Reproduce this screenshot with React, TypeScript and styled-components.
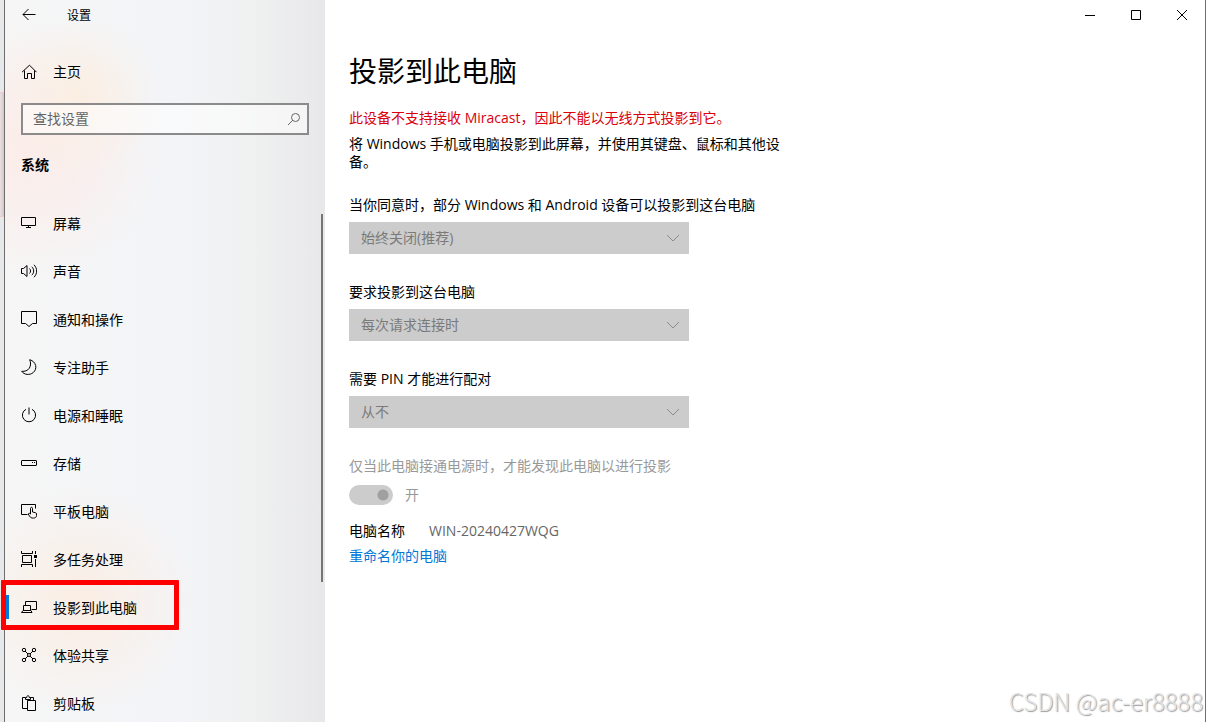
import React from "react";
import styled, { createGlobalStyle } from "styled-components";

const GlobalStyle = createGlobalStyle`
  * { box-sizing: border-box; }
  body {
    margin: 0;
    background: #fff;
    color: #000;
    font-family: "Open Sans", "Noto Sans CJK SC", sans-serif;
    font-size: 14px;
    line-height: 18px;
  }
  button, input, select { font: inherit; color: inherit; }
`;

const Desktop = styled.div`
  position: relative;
  display: flex;
  height: 100vh;
  overflow: hidden;
  padding-left: 4px;
  background:
    linear-gradient(#f3c9c9, #f3c9c9) 0 92px / 4px 1px no-repeat,
    linear-gradient(#f3c9c9, #f3c9c9) 0 216px / 4px 1px no-repeat,
    linear-gradient(90deg, #ecdfe0, #d2c8c9) 0 92px / 4px 125px no-repeat,
    linear-gradient(90deg, #e6e8ea, #cdd0d2);
`;

const Window = styled.div`
  display: flex;
  flex: 1;
  min-width: 0;
  border: solid #6e6e6e;
  border-width: 0 1px;
  background: #fff;
`;

const Sidebar = styled.aside`
  display: flex;
  flex-direction: column;
  flex: 0 0 320px;
  min-height: 0;
  background:
    radial-gradient(circle at 75px 95px, rgba(252, 238, 222, 0.7), rgba(252, 238, 222, 0.4) 35px, rgba(252, 238, 222, 0) 80px),
    radial-gradient(circle at 25px 150px, rgba(252, 235, 231, 0.85), rgba(252, 235, 231, 0.5) 65px, rgba(252, 235, 231, 0) 130px),
    radial-gradient(circle at 75px 600px, rgba(252, 235, 222, 0.8), rgba(252, 235, 222, 0.45) 50px, rgba(252, 235, 222, 0) 115px),
    linear-gradient(90deg, #f6f6f6, #f4f5f7 30%, #f3f4f7 55%, #f0f1f1 75%, #e8e8ea);
`;

const SidebarTop = styled.header`
  display: flex;
  align-items: center;
  gap: 30px;
  height: 30px;
  padding-left: 16px;
  font-size: 12px;
`;

const IconButton = styled.button`
  display: grid;
  place-items: center;
  padding: 0;
  border: 0;
  background: none;
`;

const Glyph = styled.svg`
  display: block;
  flex: none;
  fill: none;
  stroke: currentColor;
  stroke-width: 1;
`;

const SideText = styled.span`
  padding-top: 2px;
`;

const rowLayout = `
  display: flex;
  align-items: center;
  gap: 16px;
  height: 48px;
  padding-left: 16px;
  color: #000;
  text-decoration: none;
`;

const HomeLink = styled.a`
  ${rowLayout}
  margin-top: 18px;
`;

const SearchBox = styled.form`
  display: flex;
  align-items: center;
  height: 32px;
  margin: 7px 16px 0;
  padding: 0 6px 0 10px;
  border: 2px solid #8b8b8b;
  background: rgba(255, 255, 255, 0.5);
  color: #666;
`;

const SearchInput = styled.input`
  flex: 1;
  min-width: 0;
  padding: 0;
  border: 0;
  outline: 0;
  background: none;
  &::placeholder { color: #666; opacity: 1; }
`;

const GroupTitle = styled.h2`
  margin: 21px 0 0 16px;
  font-size: 14px;
  line-height: 18px;
  font-weight: 700;
`;

const NavArea = styled.div`
  position: relative;
  flex: 1;
  min-height: 0;
  margin: 25px 0 0 -5px;
`;

const NavList = styled.ul`
  height: 100%;
  margin: 0;
  padding: 0 0 0 5px;
  overflow-y: auto;
  scrollbar-width: none;
  list-style: none;
`;

const NavItem = styled.li`
  position: relative;
`;

const NavLink = styled.a<{ $current: boolean }>`
  ${rowLayout}
  background: ${(p) =>
    p.$current ? "linear-gradient(#0078d7, #0078d7) 0 12px / 4px 24px no-repeat" : "none"};
`;

const Highlight = styled.span`
  position: absolute;
  top: -3px;
  left: -4px;
  width: 178px;
  height: 50px;
  border: 5px solid #f00;
  border-radius: 1px;
  pointer-events: none;
`;

const ScrollThumb = styled.div`
  position: absolute;
  top: 15px;
  right: 2px;
  width: 2px;
  height: 368px;
  background: #757575;
`;

const Content = styled.div`
  display: flex;
  flex-direction: column;
  flex: 1;
  min-width: 0;
`;

const WindowButtons = styled.div`
  display: flex;
  justify-content: flex-end;
  height: 30px;
`;

const WindowButton = styled(IconButton)`
  width: 46px;
`;

const Main = styled.main`
  max-width: 480px;
  padding: 23px 24px 0;
`;

const Title = styled.h1`
  margin: 0;
  font-size: 28px;
  line-height: 36px;
  font-weight: 400;
`;

const Paragraph = styled.p<{ $error?: boolean }>`
  margin: ${(p) => (p.$error ? "20px" : "8px")} 0 0;
  color: ${(p) => (p.$error ? "#d9000c" : "#000")};
`;

const Field = styled.div<{ $gap?: number }>`
  display: flex;
  flex-direction: column;
  gap: ${(p) => p.$gap ?? 8}px;
  margin-top: 29px;

  ${Paragraph} + & { margin-top: 25px; }
`;

const FieldLabel = styled.label<{ $disabled?: boolean }>`
  color: ${(p) => (p.$disabled ? "#999" : "#000")};
`;

const SelectWrap = styled.div`
  display: grid;
  grid-template-columns: minmax(0, 340px);
  align-items: center;
  color: #8c8c8c;

  & > * { grid-area: 1 / 1; }
  & > svg { justify-self: end; margin-right: 9px; pointer-events: none; }
`;

const Select = styled.select`
  width: 100%;
  height: 32px;
  padding: 0 32px 0 12px;
  border: 0;
  border-radius: 0;
  appearance: none;
  background: #ccc;
  color: #7a7a7a;
  opacity: 1;
`;

const ToggleRow = styled.div`
  display: flex;
  align-items: center;
  gap: 12px;
  height: 20px;
  color: #999;
`;

const Toggle = styled.input`
  appearance: none;
  width: 44px;
  height: 20px;
  margin: 0;
  border-radius: 10px;
  background: radial-gradient(circle at 34px 10px, #a0a0a0 5px, #ccc 6px);
`;

const NameRow = styled.dl`
  display: flex;
  gap: 24px;
  margin: 17px 0 7px;

  & > dd { margin: 0; color: #666; }
`;

const RenameLink = styled.a`
  color: #0078d7;
  text-decoration: none;
`;

const Watermark = styled.div`
  position: absolute;
  right: 3px;
  bottom: 6px;
  color: #e4e4e4;
  font-family: "Noto Sans CJK SC", sans-serif;
  font-size: 24px;
  line-height: 30px;
  font-weight: 300;
  text-shadow: 1px 1px 1px #999;
  pointer-events: none;
`;

const navItems: { label: string; icon: React.ReactNode }[] = [
  { label: "屏幕", icon: <path d="M.5 2.5h14v8H.5zM7.5 10.5v2M5 12.5h5" /> },
  {
    label: "声音",
    icon: <path d="M.5 5.5h2l3.500-3v11l-3.500-3h-2zM8.500 5.500c1.400 1.400 1.400 3.600 0 5M10.800 3.800c2.500 2.400 2.500 6 0 8.400M13 1.800c3.500 3.500 3.500 9 0 12.400" />,
  },
  { label: "通知和操作", icon: <path d="M.5.5h15v12h-4l-3.500 3-3.500-3h-4z" /> },
  {
    label: "专注助手",
    icon: <path d="M8.700.700c6.600 1.800 8 9.200 3.500 12.900-3.600 2.900-9 2.300-11.500-1.300 3 .3 6-.6 7.600-3.100C9.900 6.600 9.900 3.500 8.700.700z" />,
  },
  { label: "电源和睡眠", icon: <path d="M8 .5v7M5 2.300a6.600 6.600 0 1 0 6 0" /> },
  {
    label: "存储",
    icon: (
      <>
        <rect x=".5" y="5.500" width="15" height="5" rx=".5" />
        <path d="M11 7.500h1M13 7.500h1" />
      </>
    ),
  },
  {
    label: "平板电脑",
    icon: (
      <>
        <path d="M6.500 11.500h-6v-10h14v4" />
        <path d="M9.500 11V5.500c0-1.600 2-1.600 2 0V9l3 .7c.8.2 1 .7 1 1.300v1.500c0 1.600-1.200 2.600-3 2.600-2 0-3-.4-4-2L7.200 11c.4-1 1.700-.8 2.300 0z" />
      </>
    ),
  },
  {
    label: "多任务处理",
    icon: (
      <>
        <path d="M.5 0v2.500h11V0M.5 16v-2.500h11V16M1.500 4.500h9v7h-9zM14.500 0v3M14.500 8v8" />
        <path d="M13 4h3v3h-3z" fill="currentColor" stroke="none" />
      </>
    ),
  },
  {
    label: "投影到此电脑",
    icon: <path d="M4.500 6.500v-4h11v8h-5M2.500 6.500h7v5h-7zM.5 13.500l1.500-2h8l1 2z" />,
  },
  {
    label: "体验共享",
    icon: (
      <>
        <path d="M4 4l3 3M9 9l3 3M12 4L9 7M7 9l-3 3" />
        <circle cx="3" cy="3" r="1.700" />
        <circle cx="13" cy="3" r="1.700" />
        <circle cx="3" cy="13" r="1.700" />
        <circle cx="13" cy="13" r="1.700" />
        <circle cx="8" cy="8" r="1.500" />
      </>
    ),
  },
  {
    label: "剪贴板",
    icon: <path d="M6.500 13.500h-5v-11h3M9.500 2.500h3v3M4.500 4.500v-2h1.300c0-2.600 2.400-2.600 2.400 0h1.300v2zM6.500 5.500h8v10h-8z" />,
  },
];

const fields = [
  { id: "allow", label: "当你同意时，部分 Windows 和 Android 设备可以投影到这台电脑", value: "始终关闭(推荐)" },
  { id: "ask", label: "要求投影到这台电脑", value: "每次请求连接时" },
  { id: "pin", label: "需要 PIN 才能进行配对", value: "从不" },
];

function Icon({ size = 16, children }: { size?: number; children: React.ReactNode }) {
  return (
    <Glyph width={size} height={size} viewBox={`0 0 ${size} ${size}`} aria-hidden="true">
      {children}
    </Glyph>
  );
}

export default function App() {
  return (
    <>
      <GlobalStyle />
      <Desktop lang="zh-CN">
        <Window>
          <Sidebar>
            <SidebarTop>
              <IconButton aria-label="返回">
                <Icon><path d="M2 7.500h12.500M7.500 2L2 7.500 7.500 13" /></Icon>
              </IconButton>
              <SideText>设置</SideText>
            </SidebarTop>
            <HomeLink href="#home">
              <Icon><path d="M1 8.200L8.500 1.200 15.500 8.200M3.500 6.500v8h3v-5h4v5h3v-8" /></Icon>
              主页
            </HomeLink>
            <SearchBox role="search">
              <SearchInput type="text" placeholder="查找设置" aria-label="查找设置" />
              <Icon size={14}><path d="M1 13l5-5" /><circle cx="8.500" cy="5.500" r="4" /></Icon>
            </SearchBox>
            <GroupTitle>系统</GroupTitle>
            <NavArea>
              <NavList>
                {navItems.map(({ label, icon }) => {
                  const current = label === "投影到此电脑";
                  return (
                    <NavItem key={label}>
                      <NavLink href="#" $current={current} aria-current={current ? "page" : undefined}>
                        <Icon>{icon}</Icon>
                        <SideText>{label}</SideText>
                      </NavLink>
                      {current && <Highlight />}
                    </NavItem>
                  );
                })}
              </NavList>
              <ScrollThumb />
            </NavArea>
          </Sidebar>
          <Content>
            <WindowButtons>
              <WindowButton aria-label="最小化">
                <Icon size={10}><path d="M0 5.500h10" /></Icon>
              </WindowButton>
              <WindowButton aria-label="最大化">
                <Icon size={10}><path d="M.5.5h9v9h-9z" /></Icon>
              </WindowButton>
              <WindowButton aria-label="关闭">
                <Icon size={10}><path d="M0 0l10 10M10 0L0 10" /></Icon>
              </WindowButton>
            </WindowButtons>
            <Main>
              <Title>投影到此电脑</Title>
              <Paragraph $error>此设备不支持接收 Miracast，因此不能以无线方式投影到它。</Paragraph>
              <Paragraph>
                将 Windows 手机或电脑投影到此屏幕，并使用其键盘、鼠标和其他设备。
              </Paragraph>
              {fields.map(({ id, label, value }) => (
                <Field key={id}>
                  <FieldLabel htmlFor={id}>{label}</FieldLabel>
                  <SelectWrap>
                    <Select id={id} disabled defaultValue={value}>
                      <option>{value}</option>
                    </Select>
                    <Icon size={14}><path d="M1 4l6 6 6-6" /></Icon>
                  </SelectWrap>
                </Field>
              ))}
              <Field $gap={10}>
                <FieldLabel htmlFor="power" $disabled>
                  仅当此电脑接通电源时，才能发现此电脑以进行投影
                </FieldLabel>
                <ToggleRow>
                  <Toggle id="power" type="checkbox" defaultChecked disabled />
                  <span>开</span>
                </ToggleRow>
              </Field>
              <NameRow>
                <dt>电脑名称</dt>
                <dd>WIN-20240427WQG</dd>
              </NameRow>
              <RenameLink href="#rename">重命名你的电脑</RenameLink>
            </Main>
          </Content>
        </Window>
        <Watermark>CSDN @ac-er8888</Watermark>
      </Desktop>
    </>
  );
}
